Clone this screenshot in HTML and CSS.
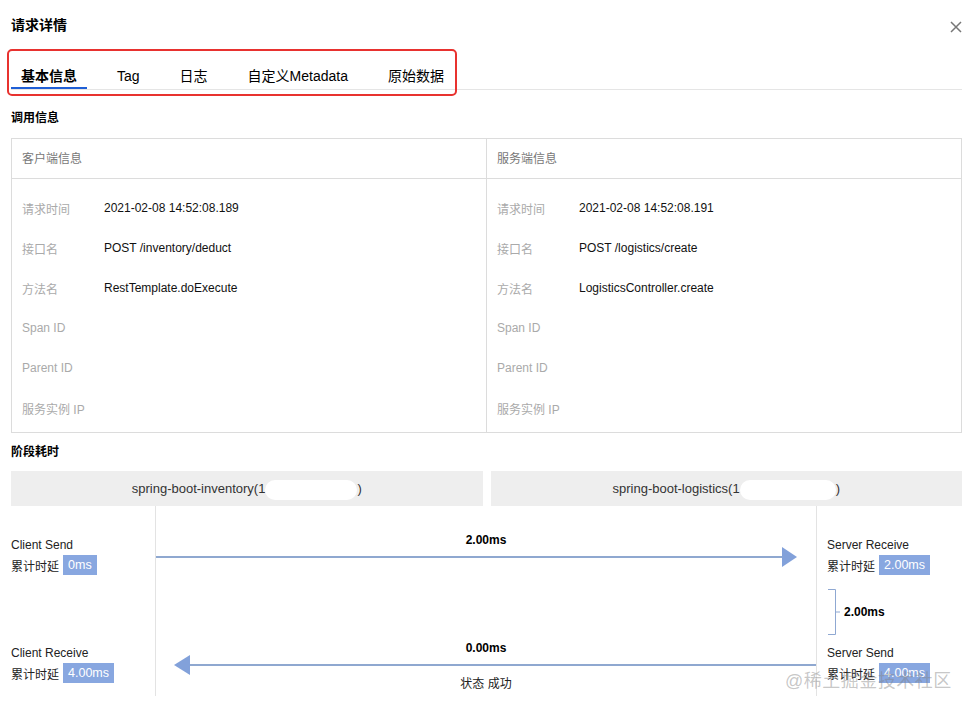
FILE: index.html
```html
<!DOCTYPE html>
<html lang="zh-CN">
<head>
    <meta charset="UTF-8">
    <meta name="viewport" content="width=device-width, initial-scale=1.0">
    <title>请求详情</title>
    <link rel="stylesheet" href="styles.css">
</head>
<body>
<div class="page">
    <div class="header">
        <h1>请求详情</h1>
        <svg class="close" width="12" height="12" viewBox="0 0 12 12">
            <path d="M1 1 L11 11 M11 1 L1 11" stroke="#777" stroke-width="1.5" fill="none"/>
        </svg>
    </div>

    <div class="tabs">
        <div class="tab active">基本信息</div>
        <div class="tab">Tag</div>
        <div class="tab">日志</div>
        <div class="tab">自定义Metadata</div>
        <div class="tab">原始数据</div>
        <div class="highlight"></div>
    </div>

    <h2>调用信息</h2>
    <div class="info-table">
        <div class="info-col">
            <div class="info-head">客户端信息</div>
            <div class="info-body">
                <div class="row"><span class="label">请求时间</span><span class="value">2021-02-08 14:52:08.189</span></div>
                <div class="row"><span class="label">接口名</span><span class="value">POST /inventory/deduct</span></div>
                <div class="row"><span class="label">方法名</span><span class="value">RestTemplate.doExecute</span></div>
                <div class="row"><span class="label">Span ID</span><span class="value"></span></div>
                <div class="row"><span class="label">Parent ID</span><span class="value"></span></div>
                <div class="row"><span class="label">服务实例 IP</span><span class="value"></span></div>
            </div>
        </div>
        <div class="info-col">
            <div class="info-head">服务端信息</div>
            <div class="info-body">
                <div class="row"><span class="label">请求时间</span><span class="value">2021-02-08 14:52:08.191</span></div>
                <div class="row"><span class="label">接口名</span><span class="value">POST /logistics/create</span></div>
                <div class="row"><span class="label">方法名</span><span class="value">LogisticsController.create</span></div>
                <div class="row"><span class="label">Span ID</span><span class="value"></span></div>
                <div class="row"><span class="label">Parent ID</span><span class="value"></span></div>
                <div class="row"><span class="label">服务实例 IP</span><span class="value"></span></div>
            </div>
        </div>
    </div>

    <h2 class="stage-title">阶段耗时</h2>
    <div class="services">
        <div class="service">spring-boot-inventory(1<span class="blur blur-left"></span>)</div>
        <div class="service">spring-boot-logistics(1<span class="blur blur-right"></span>)</div>
    </div>

    <div class="timeline">
        <div class="side">
            <div class="point first">
                <div class="point-name">Client Send</div>
                <div class="delay">累计时延 <span class="badge">0ms</span></div>
            </div>
            <div class="point second">
                <div class="point-name">Client Receive</div>
                <div class="delay">累计时延 <span class="badge">4.00ms</span></div>
            </div>
        </div>

        <div class="middle">
            <div class="cost first-cost">2.00ms</div>
            <div class="arrow to-right">
                <div class="line"></div>
                <div class="head"></div>
            </div>
            <div class="cost second-cost">0.00ms</div>
            <div class="arrow to-left">
                <div class="head"></div>
                <div class="line"></div>
            </div>
            <div class="status">状态 成功</div>
        </div>

        <div class="side server">
            <div class="point first">
                <div class="point-name">Server Receive</div>
                <div class="delay">累计时延 <span class="badge">2.00ms</span></div>
            </div>
            <div class="gap">
                <svg width="14" height="46" viewBox="0 0 14 46">
                    <path d="M1 0.5 H8.5 V45.5 H1 M8.5 23 H13" stroke="#8fa8d2" stroke-width="1" fill="none"/>
                </svg>
                <span class="cost">2.00ms</span>
            </div>
            <div class="point">
                <div class="point-name">Server Send</div>
                <div class="delay">累计时延 <span class="badge">4.00ms</span></div>
            </div>
        </div>
    </div>

    <div class="watermark">@稀土掘金技术社区</div>
</div>
</body>
</html>
```

FILE: styles.css
```css
body {
    margin: 0;
    font-family: "Liberation Sans", "Noto Sans CJK SC", sans-serif;
    font-size: 12px;
    color: #000;
    background: #fff;
}

.page {
    position: relative;
    width: 951px;
    padding: 0 4px 0 11px;
}

.header {
    display: flex;
    justify-content: space-between;
    align-items: center;
    height: 50px;
}

.header h1 {
    margin: 0;
    font-size: 14px;
    font-weight: bold;
    line-height: 20px;
}

.close {
    margin-top: 3px;
}

.tabs {
    position: relative;
    display: flex;
    gap: 20px;
    border-bottom: 1px solid #e5e5e5;
}

.tab {
    padding: 16px 10px 1px;
    line-height: 20px;
    font-size: 14px;
    color: #000;
    border-bottom: 2px solid transparent;
}

.tab.active {
    font-weight: bold;
    border-bottom-color: #1f5fd6;
}

.highlight {
    position: absolute;
    left: -4px;
    top: -1px;
    width: 446px;
    height: 43px;
    border: 2px solid #e8322f;
    border-radius: 5px;
}

h2 {
    margin: 19px 0 11px;
    font-size: 12px;
    font-weight: bold;
    line-height: 18px;
}

.info-table {
    display: flex;
    border: 1px solid #dcdcdc;
}

.info-col {
    flex: 1;
}

.info-col + .info-col {
    border-left: 1px solid #dcdcdc;
}

.info-head {
    height: 39px;
    line-height: 40px;
    padding-left: 10px;
    color: #777;
    border-bottom: 1px solid #dcdcdc;
}

.info-body {
    padding: 9px 0 4px;
}

.row {
    display: flex;
    height: 40px;
    align-items: center;
    padding-left: 10px;
}

.label {
    width: 82px;
    color: #aaa;
}

.value {
    color: #111;
}

.stage-title {
    margin: 10px 0 10px;
}

.services {
    display: flex;
    gap: 8px;
}

.service {
    flex: 1;
    height: 35px;
    line-height: 35px;
    text-align: center;
    background: #eee;
    font-size: 13px;
    color: #333;
}

.blur {
    display: inline-block;
    height: 20px;
    vertical-align: middle;
    background: #fff;
    border-radius: 10px;
}

.blur-left {
    width: 92px;
}

.blur-right {
    width: 96px;
}

.timeline {
    display: grid;
    grid-template-columns: 144px 662px 1fr;
    height: 190px;
}

.side {
    display: flex;
    flex-direction: column;
}

.point.first {
    padding-top: 31px;
}

.side .second {
    margin-top: 70px;
}

.point-name {
    line-height: 16px;
    color: #222;
}

.delay {
    display: flex;
    align-items: center;
    gap: 4px;
    margin-top: 2px;
    color: #222;
}

.badge {
    display: inline-block;
    height: 20px;
    line-height: 20px;
    padding: 0 5px;
    background: #88a7e0;
    color: #fff;
    font-size: 12.5px;
}

.middle {
    border-left: 1px solid #e3e3e3;
    border-right: 1px solid #e3e3e3;
}

.cost {
    font-weight: bold;
    line-height: 14px;
    text-align: center;
}

.first-cost {
    padding-top: 27px;
}

.second-cost {
    margin-top: 74px;
}

.arrow {
    display: flex;
    align-items: center;
    height: 20px;
}

.arrow .line {
    flex: 1;
    height: 2px;
    background: #8fa8d0;
}

.to-right {
    margin-right: 19px;
}

.to-right .head {
    border-left: 15px solid #82a1da;
    border-top: 10px solid transparent;
    border-bottom: 10px solid transparent;
}

.to-left {
    margin-left: 18px;
}

.to-left .head {
    border-right: 16px solid #82a1da;
    border-top: 10px solid transparent;
    border-bottom: 10px solid transparent;
}

.status {
    line-height: 16px;
    text-align: center;
    margin-top: 1px;
    color: #222;
}

.server {
    padding-left: 10px;
}

.gap {
    display: flex;
    align-items: center;
    gap: 3px;
    margin: 14px 0 10px;
}

.gap .cost {
    text-align: left;
}

.watermark {
    position: absolute;
    left: 785px;
    top: 669px;
    font-size: 18px;
    line-height: 24px;
    color: rgba(130, 130, 130, 0.45);
    letter-spacing: 0.5px;
}
```
